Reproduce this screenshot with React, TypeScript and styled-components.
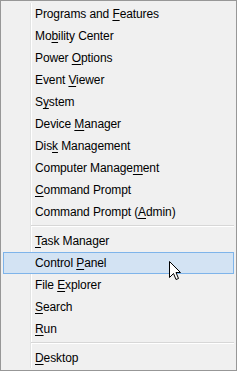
import React from 'react';
import styled, { createGlobalStyle } from 'styled-components';

const GlobalStyle = createGlobalStyle`
    html, body {
        margin: 0;
        padding: 0;
        background: #ffffff;
    }
`;

type Entry = { label: string, key: number, active?: boolean } | 'sep';

const entries: Array<Entry> = [
    { label: 'Programs and Features', key: 13 },
    { label: 'Mobility Center', key: 2 },
    { label: 'Power Options', key: 6 },
    { label: 'Event Viewer', key: 6 },
    { label: 'System', key: 1 },
    { label: 'Device Manager', key: 7 },
    { label: 'Disk Management', key: 3 },
    { label: 'Computer Management', key: 15 },
    { label: 'Command Prompt', key: 0 },
    { label: 'Command Prompt (Admin)', key: 16 },
    'sep',
    { label: 'Task Manager', key: 0 },
    { label: 'Control Panel', key: 8, active: true },
    { label: 'File Explorer', key: 5 },
    { label: 'Search', key: 0 },
    { label: 'Run', key: 0 },
    'sep',
    { label: 'Desktop', key: 0 },
];

function Label({ text, at }: { text: string, at: number }) {
    return (
        <>
            {text.slice(0, at)}
            <Key>{text.charAt(at)}</Key>
            {text.slice(at + 1)}
        </>
    );
}

function Cursor() {
    return (
        <CursorSvg width="13" height="20" viewBox="0 0 13 20">
            <path
                d="M0.5 0.5 V16.5 L4.5 12.5 L7 18.5 L9.5 17.5 L7 11.5 H11.5 Z"
                fill="#ffffff"
                stroke="#000000"
                strokeWidth="1"
                strokeLinejoin="miter"
            />
        </CursorSvg>
    );
}

export default function App() {
    return (
        <>
            <GlobalStyle />
            <Menu>
                {entries.map((e, i) =>
                    e === 'sep' ? (
                        <Separator key={i} />
                    ) : (
                        <Item key={i} active={e.active}>
                            <Label text={e.label} at={e.key} />
                        </Item>
                    )
                )}
                <Cursor />
            </Menu>
        </>
    );
}

const Menu = styled.div`
    position: relative;
    box-sizing: border-box;
    width: 237px;
    height: 371px;
    border: 1px solid #979797;
    padding: 2px 2px 1px 2px;
    display: flex;
    flex-direction: column;
    background-color: #f0f0f0;
    background-image: linear-gradient(to right, #e2e3e3 0 1px, #ffffff 1px 2px);
    background-size: 2px calc(100% - 4px);
    background-position: 29px 2px;
    background-repeat: no-repeat;
    font-family: "Liberation Sans", Arial, sans-serif;
    font-size: 12px;
    letter-spacing: -0.1px;
    color: #000000;
`;

const Item = styled.div<{ active?: boolean }>`
    box-sizing: border-box;
    height: 22px;
    line-height: 20px;
    padding-left: 31px;
    white-space: nowrap;
    border: 1px solid ${(p) => (p.active ? '#7eb4ea' : 'transparent')};
    background: ${(p) => (p.active ? '#d3e3f3' : 'transparent')};
`;

const Key = styled.span`
    text-decoration: underline;
    text-decoration-thickness: 1px;
    text-underline-offset: 2px;
`;

const Separator = styled.div`
    height: 7px;
    margin-left: 28px;
    box-sizing: border-box;
    padding-top: 2px;
    &::after {
        content: '';
        display: block;
        height: 1px;
        background: #d7d7d7;
        border-bottom: 1px solid #ffffff;
    }
`;

const CursorSvg = styled.svg`
    position: absolute;
    left: 168px;
    top: 260px;
    display: block;
`;
